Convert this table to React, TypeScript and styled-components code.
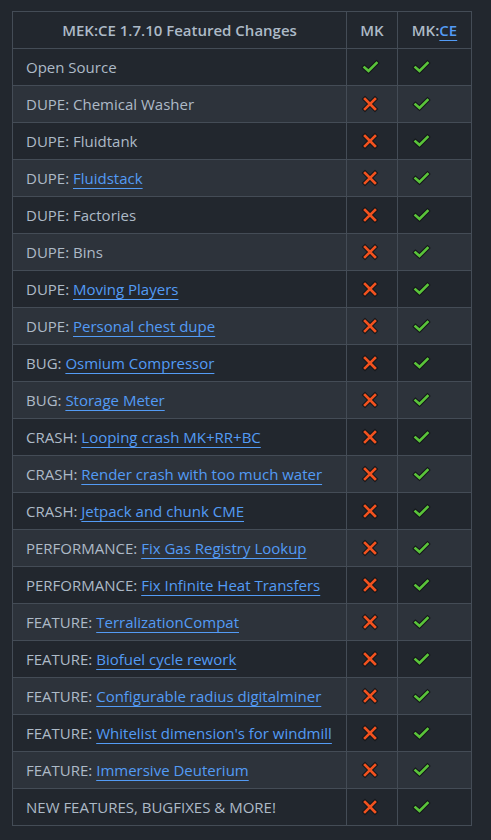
import React from 'react'
import styled, { createGlobalStyle } from 'styled-components'

type Row = {
  prefix: string
  link?: string
  mk: boolean
}

const rows: Row[] = [
  { prefix: 'Open Source', mk: true },
  { prefix: 'DUPE: Chemical Washer', mk: false },
  { prefix: 'DUPE: Fluidtank', mk: false },
  { prefix: 'DUPE: ', link: 'Fluidstack', mk: false },
  { prefix: 'DUPE: Factories', mk: false },
  { prefix: 'DUPE: Bins', mk: false },
  { prefix: 'DUPE: ', link: 'Moving Players', mk: false },
  { prefix: 'DUPE: ', link: 'Personal chest dupe', mk: false },
  { prefix: 'BUG: ', link: 'Osmium Compressor', mk: false },
  { prefix: 'BUG: ', link: 'Storage Meter', mk: false },
  { prefix: 'CRASH: ', link: 'Looping crash MK+RR+BC', mk: false },
  { prefix: 'CRASH: ', link: 'Render crash with too much water', mk: false },
  { prefix: 'CRASH: ', link: 'Jetpack and chunk CME', mk: false },
  { prefix: 'PERFORMANCE: ', link: 'Fix Gas Registry Lookup', mk: false },
  { prefix: 'PERFORMANCE: ', link: 'Fix Infinite Heat Transfers', mk: false },
  { prefix: 'FEATURE: ', link: 'TerralizationCompat', mk: false },
  { prefix: 'FEATURE: ', link: 'Biofuel cycle rework', mk: false },
  { prefix: 'FEATURE: ', link: 'Configurable radius digitalminer', mk: false },
  { prefix: 'FEATURE: ', link: "Whitelist dimension's for windmill", mk: false },
  { prefix: 'FEATURE: ', link: 'Immersive Deuterium', mk: false },
  { prefix: 'NEW FEATURES, BUGFIXES & MORE!', mk: false },
]

// emoji-style marks: dark outline under a coloured stroke
const CHECK = 'M4.5 10.5 L8.5 14 L16.5 6'
const CROSS = 'M5 5 L15 15 M15 5 L5 15'

const Check = () => (
  <svg width="20" height="20" viewBox="0 0 20 20">
    <path d={CHECK} fill="none" stroke="#14171a" strokeWidth="4.6" strokeLinecap="square" strokeLinejoin="miter" />
    <path d={CHECK} fill="none" stroke="#5ac43a" strokeWidth="2.6" strokeLinecap="square" strokeLinejoin="miter" />
  </svg>
)

const Cross = () => (
  <svg width="20" height="20" viewBox="0 0 20 20">
    <path d={CROSS} fill="none" stroke="#14171a" strokeWidth="4.6" strokeLinecap="square" />
    <path d={CROSS} fill="none" stroke="#f2521f" strokeWidth="2.6" strokeLinecap="square" />
  </svg>
)

const App = () => {
  return (
    <>
      <GlobalStyle />
      <Page>
        <Table>
          <thead>
            <tr>
              <HeadCell>MEK:CE 1.7.10 Featured Changes</HeadCell>
              <HeadCell>MK</HeadCell>
              <HeadCell>MK:<Link href="#">CE</Link></HeadCell>
            </tr>
          </thead>
          <tbody>
            {rows.map((row, i) => (
              <BodyRow key={i} striped={i % 2 === 1}>
                <Cell>
                  {row.prefix}
                  {row.link && <Link href="#">{row.link}</Link>}
                </Cell>
                <MarkCell>{row.mk ? <Check /> : <Cross />}</MarkCell>
                <MarkCell><Check /></MarkCell>
              </BodyRow>
            ))}
          </tbody>
        </Table>
      </Page>
    </>
  )
}

const GlobalStyle = createGlobalStyle`
  html, body {
    margin: 0;
    padding: 0;
    background: #22272e;
  }
  body {
    font-family: "Open Sans", "Noto Sans", sans-serif;
    color: #adbac7;
  }
`

const Page = styled.div`
  min-height: 840px;
  padding: 11px 0 0 12px;
  box-sizing: border-box;
`

const Table = styled.table`
  border-collapse: collapse;
  border-spacing: 0;
  width: 460px;
  font-size: 15px;
  line-height: 24px;
`

const HeadCell = styled.th`
  border: 1px solid #444c56;
  padding: 6px 13px;
  font-weight: 600;
  text-align: center;
  white-space: nowrap;
  &:nth-child(1) { width: 307px; }
  &:nth-child(2) { width: 24px; }
`

const BodyRow = styled.tr<{ striped: boolean }>`
  background: ${({ striped }) => (striped ? '#2d333b' : '#22272e')};
`

const Cell = styled.td`
  border: 1px solid #444c56;
  padding: 6px 13px;
  white-space: nowrap;
`

const MarkCell = styled.td`
  border: 1px solid #444c56;
  padding: 6px 13px;
  svg {
    display: block;
    margin: 2px 0;
  }
`

const Link = styled.a`
  color: #539bf5;
  text-decoration: underline;
  text-underline-offset: 4px;
  text-decoration-thickness: 1px;
`

export default App
